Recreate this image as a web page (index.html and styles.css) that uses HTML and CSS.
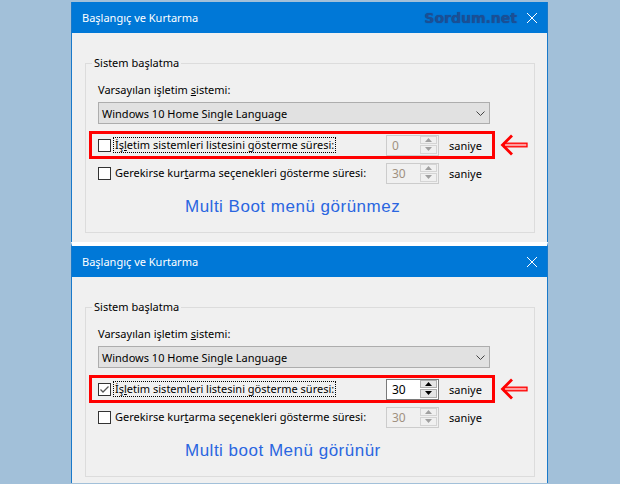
FILE: index.html
```html
<!DOCTYPE html>
<html lang="tr">
	<head>
		<meta charset="utf-8" />
		<link rel="stylesheet" href="styles.css">
	</head>
	<body>
		<div class="desk">
			<section class="dialog">
				<header class="titlebar">
					<span class="title">Başlangıç ve Kurtarma</span>
					<span class="brand">Sordum.net</span>
					<svg class="close" viewBox="0 0 10 10"><path d="M0 0L10 10M10 0L0 10"/></svg>
				</header>
				<div class="content">
					<fieldset class="group">
						<legend>Sistem başlatma</legend>
						<div class="label">Varsayılan işletim <u>s</u>istemi:</div>
						<div class="combo">
							<span>Windows 10 Home Single Language</span>
							<svg class="chevron" viewBox="0 0 9 5"><path d="M0.5 0.5L4.5 4.5L8.5 0.5"/></svg>
						</div>
						<div class="mark-line">
							<div class="row marked">
								<span class="check"></span>
								<span class="caption focus">İş<u>l</u>etim sistemleri listesini gösterme süresi:</span>
								<div class="spin disabled">
									<span class="spin-value">0</span>
									<span class="spin-btns">
										<span class="spin-btn"><svg viewBox="0 0 7 4"><path d="M0 4L3.5 0L7 4z"/></svg></span>
										<span class="spin-btn"><svg viewBox="0 0 7 4"><path d="M0 0L3.5 4L7 0z"/></svg></span>
									</span>
								</div>
								<span class="unit">saniye</span>
							</div>
							<svg class="arrow" viewBox="0 0 28 22">
								<rect x="4" y="9.2" width="23" height="3.6" fill="#ff9c9c" stroke="#f00" stroke-width="1.3"/>
								<path d="M12 1.5L2.5 11L12 20.5" fill="none" stroke="#f00" stroke-width="2.8"/>
							</svg>
						</div>
						<div class="row">
							<span class="check"></span>
							<span class="caption">Gerekirse kur<u>t</u>arma seçenekleri gösterme süresi:</span>
							<div class="spin disabled">
								<span class="spin-value">30</span>
								<span class="spin-btns">
									<span class="spin-btn"><svg viewBox="0 0 7 4"><path d="M0 4L3.5 0L7 4z"/></svg></span>
									<span class="spin-btn"><svg viewBox="0 0 7 4"><path d="M0 0L3.5 4L7 0z"/></svg></span>
								</span>
							</div>
							<span class="unit">saniye</span>
						</div>
						<p class="note">Multi Boot menü görünmez</p>
					</fieldset>
				</div>
			</section>
			<section class="dialog second">
				<header class="titlebar">
					<span class="title">Başlangıç ve Kurtarma</span>
					<svg class="close" viewBox="0 0 10 10"><path d="M0 0L10 10M10 0L0 10"/></svg>
				</header>
				<div class="content">
					<fieldset class="group">
						<legend>Sistem başlatma</legend>
						<div class="label">Varsayılan işletim <u>s</u>istemi:</div>
						<div class="combo">
							<span>Windows 10 Home Single Language</span>
							<svg class="chevron" viewBox="0 0 9 5"><path d="M0.5 0.5L4.5 4.5L8.5 0.5"/></svg>
						</div>
						<div class="mark-line">
							<div class="row marked">
								<span class="check checked"><svg viewBox="0 0 11 11"><path d="M1.5 5.5L4 8L9.5 2.5"/></svg></span>
								<span class="caption focus">İş<u>l</u>etim sistemleri listesini gösterme süresi:</span>
								<div class="spin">
									<span class="spin-value">30</span>
									<span class="spin-btns">
										<span class="spin-btn"><svg viewBox="0 0 7 4"><path d="M0 4L3.5 0L7 4z"/></svg></span>
										<span class="spin-btn"><svg viewBox="0 0 7 4"><path d="M0 0L3.5 4L7 0z"/></svg></span>
									</span>
								</div>
								<span class="unit">saniye</span>
							</div>
							<svg class="arrow" viewBox="0 0 28 22">
								<rect x="4" y="9.2" width="23" height="3.6" fill="#ff9c9c" stroke="#f00" stroke-width="1.3"/>
								<path d="M12 1.5L2.5 11L12 20.5" fill="none" stroke="#f00" stroke-width="2.8"/>
							</svg>
						</div>
						<div class="row">
							<span class="check"></span>
							<span class="caption">Gerekirse kur<u>t</u>arma seçenekleri gösterme süresi:</span>
							<div class="spin disabled">
								<span class="spin-value">30</span>
								<span class="spin-btns">
									<span class="spin-btn"><svg viewBox="0 0 7 4"><path d="M0 4L3.5 0L7 4z"/></svg></span>
									<span class="spin-btn"><svg viewBox="0 0 7 4"><path d="M0 0L3.5 4L7 0z"/></svg></span>
								</span>
							</div>
							<span class="unit">saniye</span>
						</div>
						<p class="note">Multi boot Menü görünür</p>
					</fieldset>
				</div>
			</section>
		</div>
	</body>
</html>
```

FILE: styles.css
```css
body {
	margin: 0;
	background-color: #a2c0d9;
	font-family: "Noto Sans", sans-serif;
	font-size: 11px;
	color: #000;
}

.desk {
	padding: 2px 0 0 71px;
}

.dialog {
	width: 477px;
	box-sizing: border-box;
	background-color: #f0f0f0;
	border-left: 1px solid #1979ca;
	border-right: 1px solid #1979ca;
}

.dialog.second {
	border-top: 4px solid #fff;
}

.titlebar {
	display: flex;
	align-items: center;
	height: 31px;
	padding: 0 10px;
	background-color: #0078d7;
	color: #fff;
}

.title {
	flex-grow: 1;
}

.brand {
	margin-right: 10px;
	font: bold 14px "DejaVu Sans", sans-serif;
	color: #1b4f95;
	text-shadow: 0 0 1px rgba(20, 60, 120, 0.8);
}

.close {
	width: 10px;
	height: 10px;
	stroke: #fff;
	stroke-width: 1;
}

.content {
	padding: 22px 12px 9px 13px;
}

.second .content {
	padding-bottom: 6px;
}

.group {
	margin: 0;
	min-width: 0;
	padding: 11px 0 15px 12px;
	border: 1px solid #dcdcdc;
}

.group legend {
	margin-left: -6px;
	padding: 0 2px;
	line-height: 16px;
}

.label {
	line-height: 16px;
}

.combo {
	display: flex;
	align-items: center;
	justify-content: space-between;
	box-sizing: border-box;
	width: 392px;
	height: 22px;
	margin-top: 4px;
	padding: 0 4px 0 3px;
	background-color: #e1e1e1;
	border: 1px solid #adadad;
}

.chevron {
	width: 9px;
	height: 5px;
	fill: none;
	stroke: #444;
	stroke-width: 1;
}

.mark-line {
	display: flex;
	align-items: center;
	gap: 5px;
	margin-top: 7px;
}

.row {
	display: flex;
	align-items: center;
	box-sizing: border-box;
	width: 406px;
	height: 28px;
	margin-left: -9px;
	padding-left: 6px;
	border: 3px solid transparent;
}

.row.marked {
	border-color: #f00;
}

.check {
	display: block;
	flex-shrink: 0;
	box-sizing: border-box;
	width: 13px;
	height: 13px;
	background-color: #fff;
	border: 1px solid #333;
}

.check svg {
	display: block;
	width: 11px;
	height: 11px;
	fill: none;
	stroke: #555;
	stroke-width: 1.3;
}

.caption {
	display: inline-block;
	margin: 0 auto 0 2px;
	padding: 0 1px;
	line-height: 14px;
	white-space: nowrap;
	border: 1px solid transparent;
}

.caption.focus {
	border: 1px dotted #000;
}

.spin {
	display: flex;
	flex-shrink: 0;
	box-sizing: border-box;
	width: 53px;
	height: 21px;
	background-color: #fff;
	border: 1px solid #7a7a7a;
}

.spin.disabled {
	background-color: #f0f0f0;
	border-color: #ccc;
	color: #a09080;
}

.spin-value {
	flex-grow: 1;
	padding-left: 5px;
	line-height: 19px;
	font-size: 12px;
}

.spin-btns {
	display: flex;
	flex-direction: column;
	gap: 1px;
	width: 17px;
	padding: 0 1px 1px 0;
}

.spin-btn {
	display: flex;
	align-items: center;
	justify-content: center;
	flex-grow: 1;
	background-color: #e5e5e5;
	border: 1px solid #adadad;
}

.spin-btn svg {
	width: 7px;
	height: 4px;
	fill: #000;
}

.disabled .spin-btn {
	background-color: #f0f0f0;
	border-color: #d4d4d4;
}

.disabled .spin-btn svg {
	fill: #a0a0a0;
}

.unit {
	flex-shrink: 0;
	width: 43px;
	margin-left: 10px;
}

.arrow {
	width: 28px;
	height: 22px;
}

.note {
	margin: 10px 0 0 87px;
	font: 17px "Liberation Sans", sans-serif;
	line-height: 20px;
	letter-spacing: 0.5px;
	color: #2a66e0;
}
```
